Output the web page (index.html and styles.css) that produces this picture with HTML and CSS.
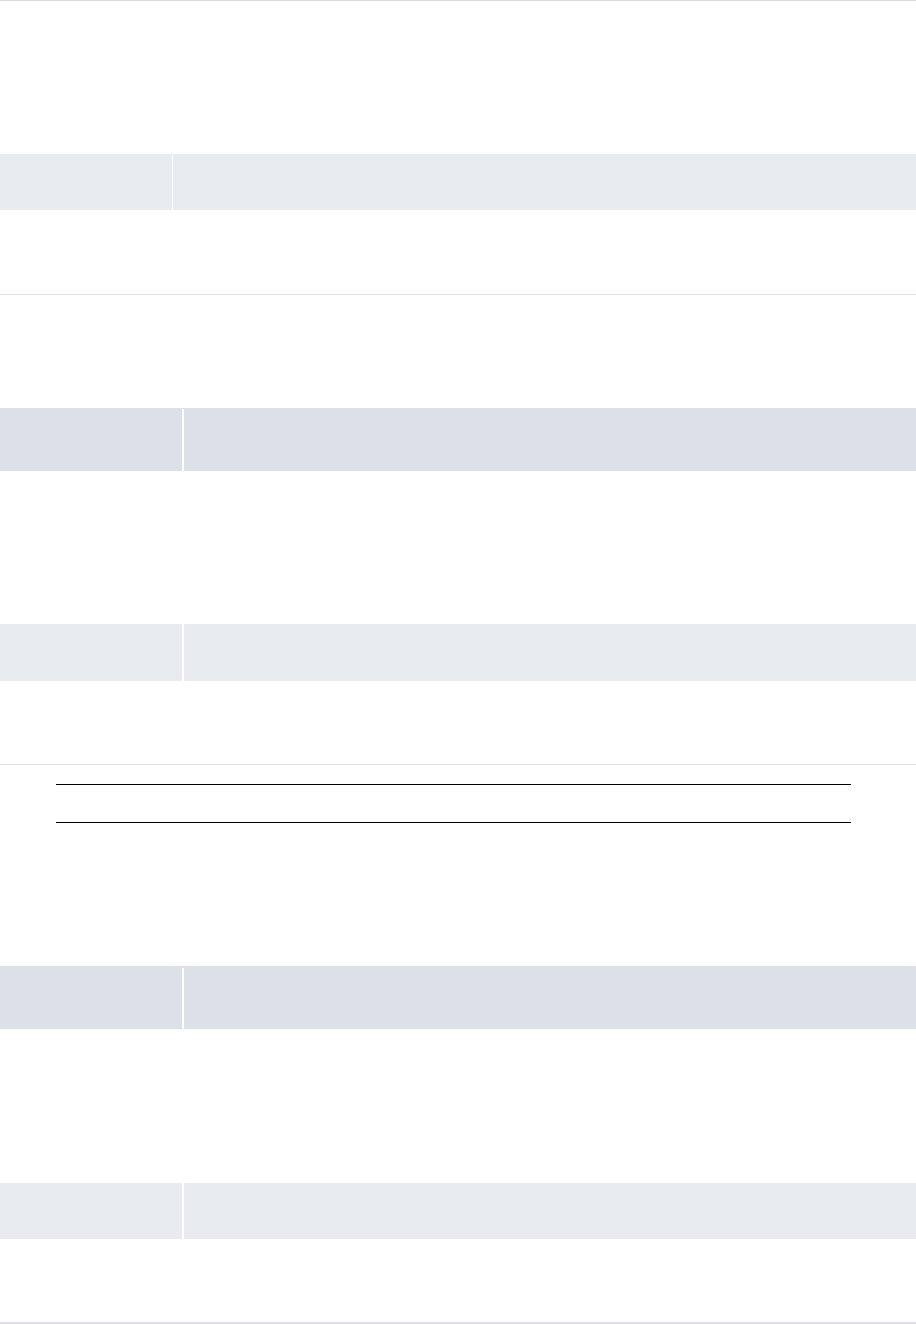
FILE: index.html
```html
<!DOCTYPE html>
<html lang="en">
<head>
<meta charset="utf-8">
<title>Form skeleton</title>
<link rel="stylesheet" href="styles.css">
</head>
<body>
<div class="page">
  <section class="block block-a">
    <div class="row row-light row-a">
      <div class="cell"></div>
      <div class="cell"></div>
    </div>
  </section>

  <section class="block block-b">
    <div class="row row-dark row-b1">
      <div class="cell"></div>
      <div class="divider"></div>
      <div class="cell"></div>
    </div>
    <div class="row row-light row-b2">
      <div class="cell"></div>
      <div class="cell"></div>
    </div>
  </section>

  <div class="rules"></div>

  <section class="block block-c">
    <div class="row row-dark row-c1">
      <div class="cell"></div>
      <div class="divider"></div>
      <div class="cell"></div>
    </div>
    <div class="row row-light row-c2">
      <div class="cell"></div>
      <div class="cell"></div>
    </div>
  </section>
</div>
</body>
</html>
```
FILE: styles.css
```css
* { box-sizing: border-box; }
html, body {
  margin: 0;
  padding: 0;
  background: #ffffff;
  font-family: "Liberation Sans", Arial, sans-serif;
}
.page {
  display: flex;
  flex-direction: column;
  width: 916px;
}
.block {
  display: flex;
  flex-direction: column;
}
.block-a {
  border-top: 1px solid #d6dce6;
  padding-top: 153px;
  padding-bottom: 84px;
  border-bottom: 1px solid #e0dde9;
}
.block-b {
  padding-top: 113px;
  padding-bottom: 83px;
  border-bottom: 1px solid #e0dde9;
}
.block-c {
  padding-top: 143px;
  padding-bottom: 83px;
  border-bottom: 2px solid #dcdee9;
}
.row {
  display: grid;
}
.row-light .cell { background: #e8ecf1; }
.row-dark { background: #dce0e9; }
.divider {
  background: #ffffff;
  margin-top: 1px;
}
.row-a {
  grid-template-columns: 172px 1fr;
  column-gap: 1px;
  height: 56px;
}
.row-b1 {
  grid-template-columns: 182px 2px 1fr;
  height: 63px;
}
.row-b2 {
  grid-template-columns: 182px 1fr;
  column-gap: 2px;
  height: 57px;
  margin-top: 153px;
}
.row-c1 {
  grid-template-columns: 182px 2px 1fr;
  height: 63px;
}
.row-c1 .divider { margin-top: 2px; }
.row-c2 {
  grid-template-columns: 182px 1fr;
  column-gap: 2px;
  height: 56px;
  margin-top: 154px;
}
.rules {
  margin: 19px 0 0 56px;
  width: 795px;
  height: 39px;
  border-top: 1px solid #000000;
  border-bottom: 1px solid #000000;
}
```
